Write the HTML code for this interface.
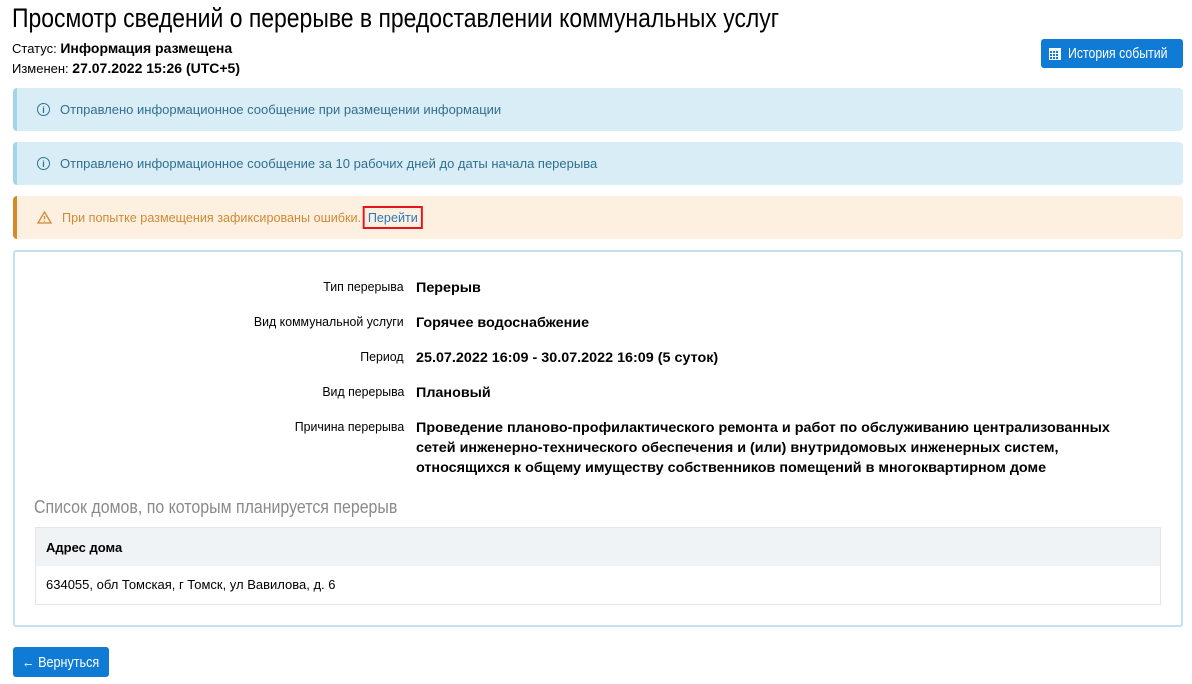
<!DOCTYPE html>
<html><head><meta charset="utf-8"><style>
*{box-sizing:border-box;margin:0;padding:0}
body{width:1192px;height:684px;background:#fff;font-family:"Liberation Sans",sans-serif;color:#000;position:relative;overflow:hidden;font-size:13px}
.abs{position:absolute;white-space:nowrap}
.sx{display:inline-block;transform-origin:left center}
h1{position:absolute;left:12px;top:3px;font-size:27px;font-weight:normal;white-space:nowrap;transform:scaleX(0.85);transform-origin:left top}
.btn{position:absolute;background:#0f7bd5;color:#fff;border-radius:3px;font-size:15px;display:flex;align-items:center;justify-content:center;white-space:nowrap}
.alert{position:absolute;left:13px;width:1170px;height:43px;border-radius:4px;border-left:4px solid;display:flex;align-items:center;padding-left:20px;font-size:13px}
.info{background:#d9edf7;border-color:#a7d3e8;color:#31708f}
.warn{background:#fdf0e1;border-color:#d48b2b;color:#d08a35}
.ic{width:13px;height:13px;border:1.2px solid currentColor;border-radius:50%;font-size:9px;display:inline-flex;align-items:center;justify-content:center;margin-right:10px;font-weight:bold}
.panel{position:absolute;left:13px;top:250px;width:1170px;height:377px;border:2px solid #c6e0f3;border-radius:3px}
.lab{position:absolute;right:788px;font-size:13px;white-space:nowrap;transform:scaleX(0.95);transform-origin:right top}
.val{position:absolute;left:416px;font-size:14px;font-weight:bold;line-height:20px;transform:scaleX(1.025);transform-origin:left top}
</style></head><body>
<h1>Просмотр сведений о перерыве в предоставлении коммунальных услуг</h1>
<div class="abs" style="left:12px;top:40px">Статус: <b style="font-size:14px">Информация размещена</b></div>
<div class="abs" style="left:12px;top:60px">Изменен: <b style="font-size:14px">27.07.2022 15:26 (UTC+5)</b></div>
<div class="btn" style="left:1041px;top:39px;width:142px;height:29px">
<svg width="12" height="13" viewBox="0 0 12 13" style="margin-right:7px;margin-left:-6px"><rect x="0" y="1" width="12" height="12" fill="#fff"/><g fill="#0f7bd5"><rect x="1" y="4" width="2" height="2"/><rect x="4" y="4" width="2" height="2"/><rect x="7" y="4" width="2" height="2"/><rect x="1" y="7" width="2" height="2"/><rect x="4" y="7" width="2" height="2"/><rect x="7" y="7" width="2" height="2"/><rect x="1" y="10" width="2" height="2"/><rect x="4" y="10" width="2" height="2"/><rect x="7" y="10" width="2" height="2"/></g></svg><span style="display:inline-block;width:101px"><span class="sx" style="transform:scaleX(0.82)">История событий</span></span></div>
<div class="alert info" style="top:88px"><span class="ic">i</span>Отправлено информационное сообщение при размещении информации</div>
<div class="alert info" style="top:142px"><span class="ic">i</span>Отправлено информационное сообщение за 10 рабочих дней до даты начала перерыва</div>
<div class="alert warn" style="top:196px"><svg width="15" height="13" viewBox="0 0 15 13" style="margin-right:10px"><path d="M7.5 1 L14 12 H1 Z" fill="none" stroke="#d08a35" stroke-width="1.3"/><path d="M7.5 5 V8.5 M7.5 9.7 V10.8" stroke="#d08a35" stroke-width="1.3"/></svg><span class="sx" style="transform:scaleX(0.97)">При попытке размещения зафиксированы ошибки.<span style="margin-left:2px;color:#2a7ab8;border:2px solid #e8141b;padding:2px 3px">Перейти</span></span></div>
<div class="panel"></div>
<div class="lab" style="top:279px">Тип перерыва</div><div class="val" style="top:277px">Перерыв</div>
<div class="lab" style="top:314px">Вид коммунальной услуги</div><div class="val" style="top:312px">Горячее водоснабжение</div>
<div class="lab" style="top:349px">Период</div><div class="val" style="top:347px">25.07.2022 16:09 - 30.07.2022 16:09 (5 суток)</div>
<div class="lab" style="top:384px">Вид перерыва</div><div class="val" style="top:382px">Плановый</div>
<div class="lab" style="top:419px">Причина перерыва</div><div class="val" style="top:417px;white-space:nowrap">Проведение планово-профилактического ремонта и работ по обслуживанию централизованных<br>сетей инженерно-технического обеспечения и (или) внутридомовых инженерных систем,<br>относящихся к общему имуществу собственников помещений в многоквартирном доме</div>
<div class="abs" style="left:34px;top:497px;font-size:18px;color:#8a8a8a;transform:scaleX(0.885);transform-origin:left top">Список домов, по которым планируется перерыв</div>
<div style="position:absolute;left:35px;top:527px;width:1126px;height:78px;border:1px solid #e3e6ea">
<div style="height:38px;background:#f0f3f6;font-weight:bold;padding:12px 0 0 10px">Адрес дома</div>
<div style="padding:11px 0 0 10px">634055, обл Томская, г Томск, ул Вавилова, д. 6</div></div>
<div class="btn" style="left:13px;top:647px;width:96px;height:30px"><span style="display:inline-block;width:78px"><span class="sx" style="transform:scaleX(0.84)">← Вернуться</span></span></div>
</body></html>
